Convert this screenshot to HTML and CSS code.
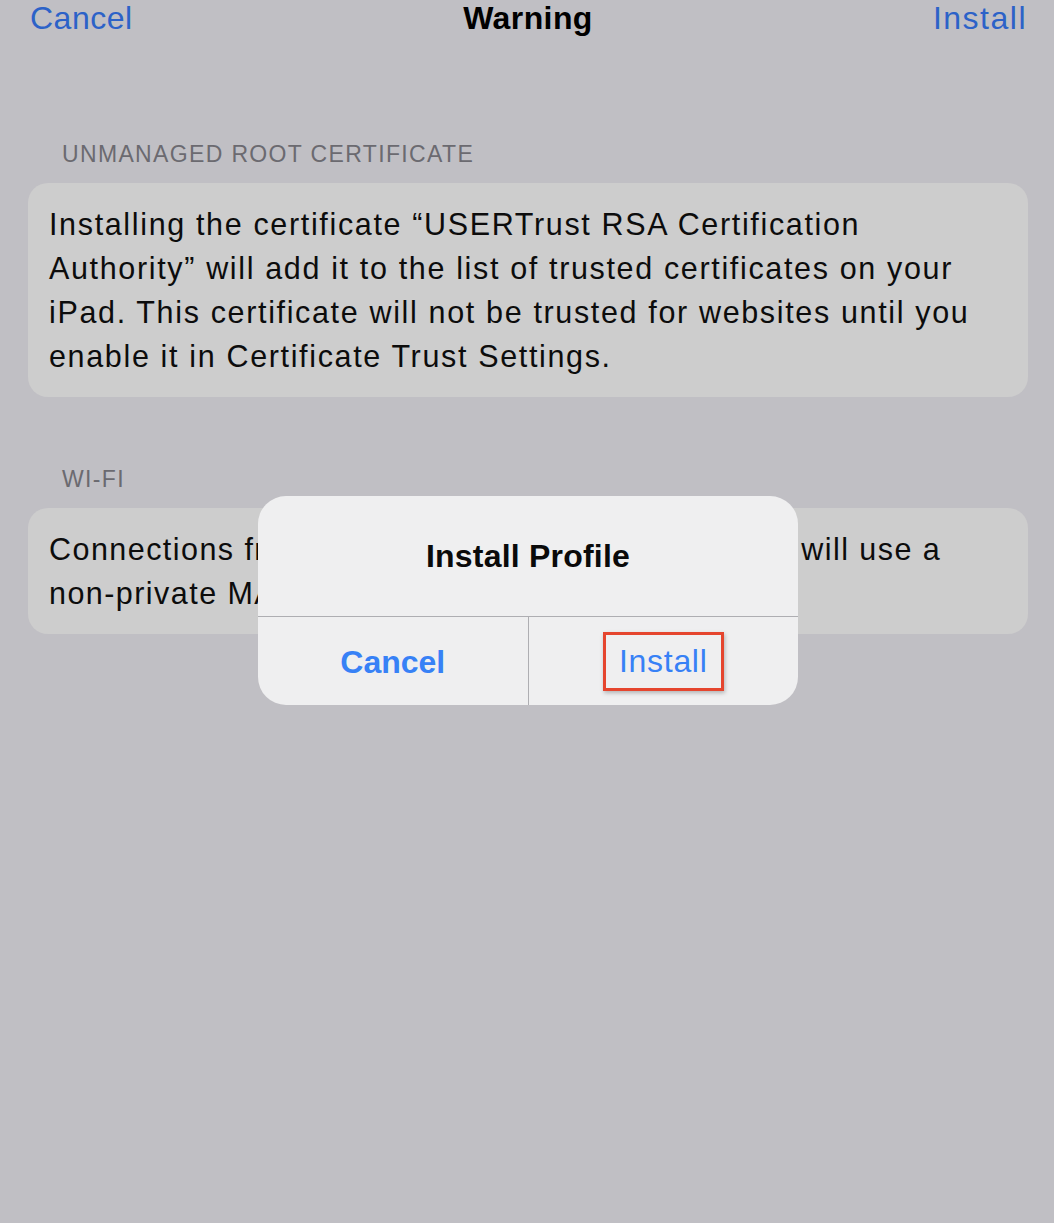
FILE: index.html
```html
<!DOCTYPE html>
<html>
<head>
<meta charset="utf-8">
<link rel="stylesheet" href="styles.css">
</head>
<body>
<div class="screen">
  <header class="nav">
    <span class="nav-btn left">Cancel</span>
    <span class="nav-title">Warning</span>
    <span class="nav-btn right">Install</span>
  </header>

  <section class="group first">
    <div class="group-header">UNMANAGED ROOT CERTIFICATE</div>
    <div class="card">Installing the certificate “USERTrust RSA Certification<br>Authority” will add it to the list of trusted certificates on your<br>iPad. This certificate will not be trusted for websites until you<br>enable it in Certificate Trust Settings.</div>
  </section>

  <section class="group second">
    <div class="group-header">WI-FI</div>
    <div class="card tight">Connections from this device to the Wi-Fi network will use a<br>non-private MAC address.</div>
  </section>

  <div class="alert">
    <div class="alert-title">Install Profile</div>
    <div class="alert-actions">
      <div class="alert-btn bold">Cancel</div>
      <div class="alert-btn"><span class="highlight">Install</span></div>
    </div>
  </div>
</div>
</body>
</html>
```

FILE: styles.css
```css
html, body {
  margin: 0;
  padding: 0;
}
body {
  background: #c0bfc4;
  font-family: "Liberation Sans", Arial, sans-serif;
  width: 1054px;
  height: 1223px;
  overflow: hidden;
}
.screen {
  position: relative;
  height: 1223px;
}
.nav {
  display: grid;
  grid-template-columns: 1fr auto 1fr;
  align-items: center;
  padding: 0 28px 0 30px;
  height: 34px;
  font-size: 32px;
}
.nav-btn {
  color: #2c62c8;
  letter-spacing: 0.5px;
}
.nav-btn.right {
  justify-self: end;
  letter-spacing: 1.5px;
  margin-right: -1px;
}
.nav-title {
  color: #000;
  font-weight: 600;
  letter-spacing: 0.4px;
}
.group {
  padding: 0 26px 0 28px;
}
.group.first {
  margin-top: 107px;
}
.group.second {
  margin-top: 69px;
}
.group-header {
  color: #6b6a70;
  font-size: 23px;
  letter-spacing: 1.35px;
  padding-left: 34px;
  height: 26px;
  line-height: 26px;
  margin-bottom: 16px;
}
.card {
  background: #cdcdcd;
  border-radius: 20px;
  padding: 19px 10px 19px 21px;
  font-size: 30.5px;
  letter-spacing: 1.65px;
  line-height: 44px;
  color: #0c0c0c;
  white-space: nowrap;
  overflow: hidden;
}
.card.tight {
  letter-spacing: 1.45px;
}
.alert {
  position: absolute;
  left: 258px;
  top: 496px;
  width: 540px;
  height: 209px;
  background: #efeff0;
  border-radius: 28px;
  overflow: hidden;
  display: flex;
  flex-direction: column;
}
.alert-title {
  height: 120px;
  display: flex;
  align-items: center;
  justify-content: center;
  font-size: 32px;
  font-weight: 700;
  letter-spacing: 0.2px;
  color: #0a0a0a;
  border-bottom: 1px solid #aeaeb2;
}
.alert-actions {
  flex: 1;
  display: flex;
}
.alert-btn {
  flex: 1;
  display: flex;
  align-items: center;
  justify-content: center;
  font-size: 32px;
  color: #3781f6;
}
.alert-btn + .alert-btn {
  border-left: 1px solid #aeaeb2;
}
.alert-btn.bold {
  font-weight: 700;
  padding-top: 2px;
}
.highlight {
  border: 3px solid #e5452e;
  padding: 8px 13px 9px 13px;
  line-height: 36px;
  letter-spacing: 0.7px;
  box-shadow: 1px 2px 4px rgba(0,0,0,0.25);
}
```
